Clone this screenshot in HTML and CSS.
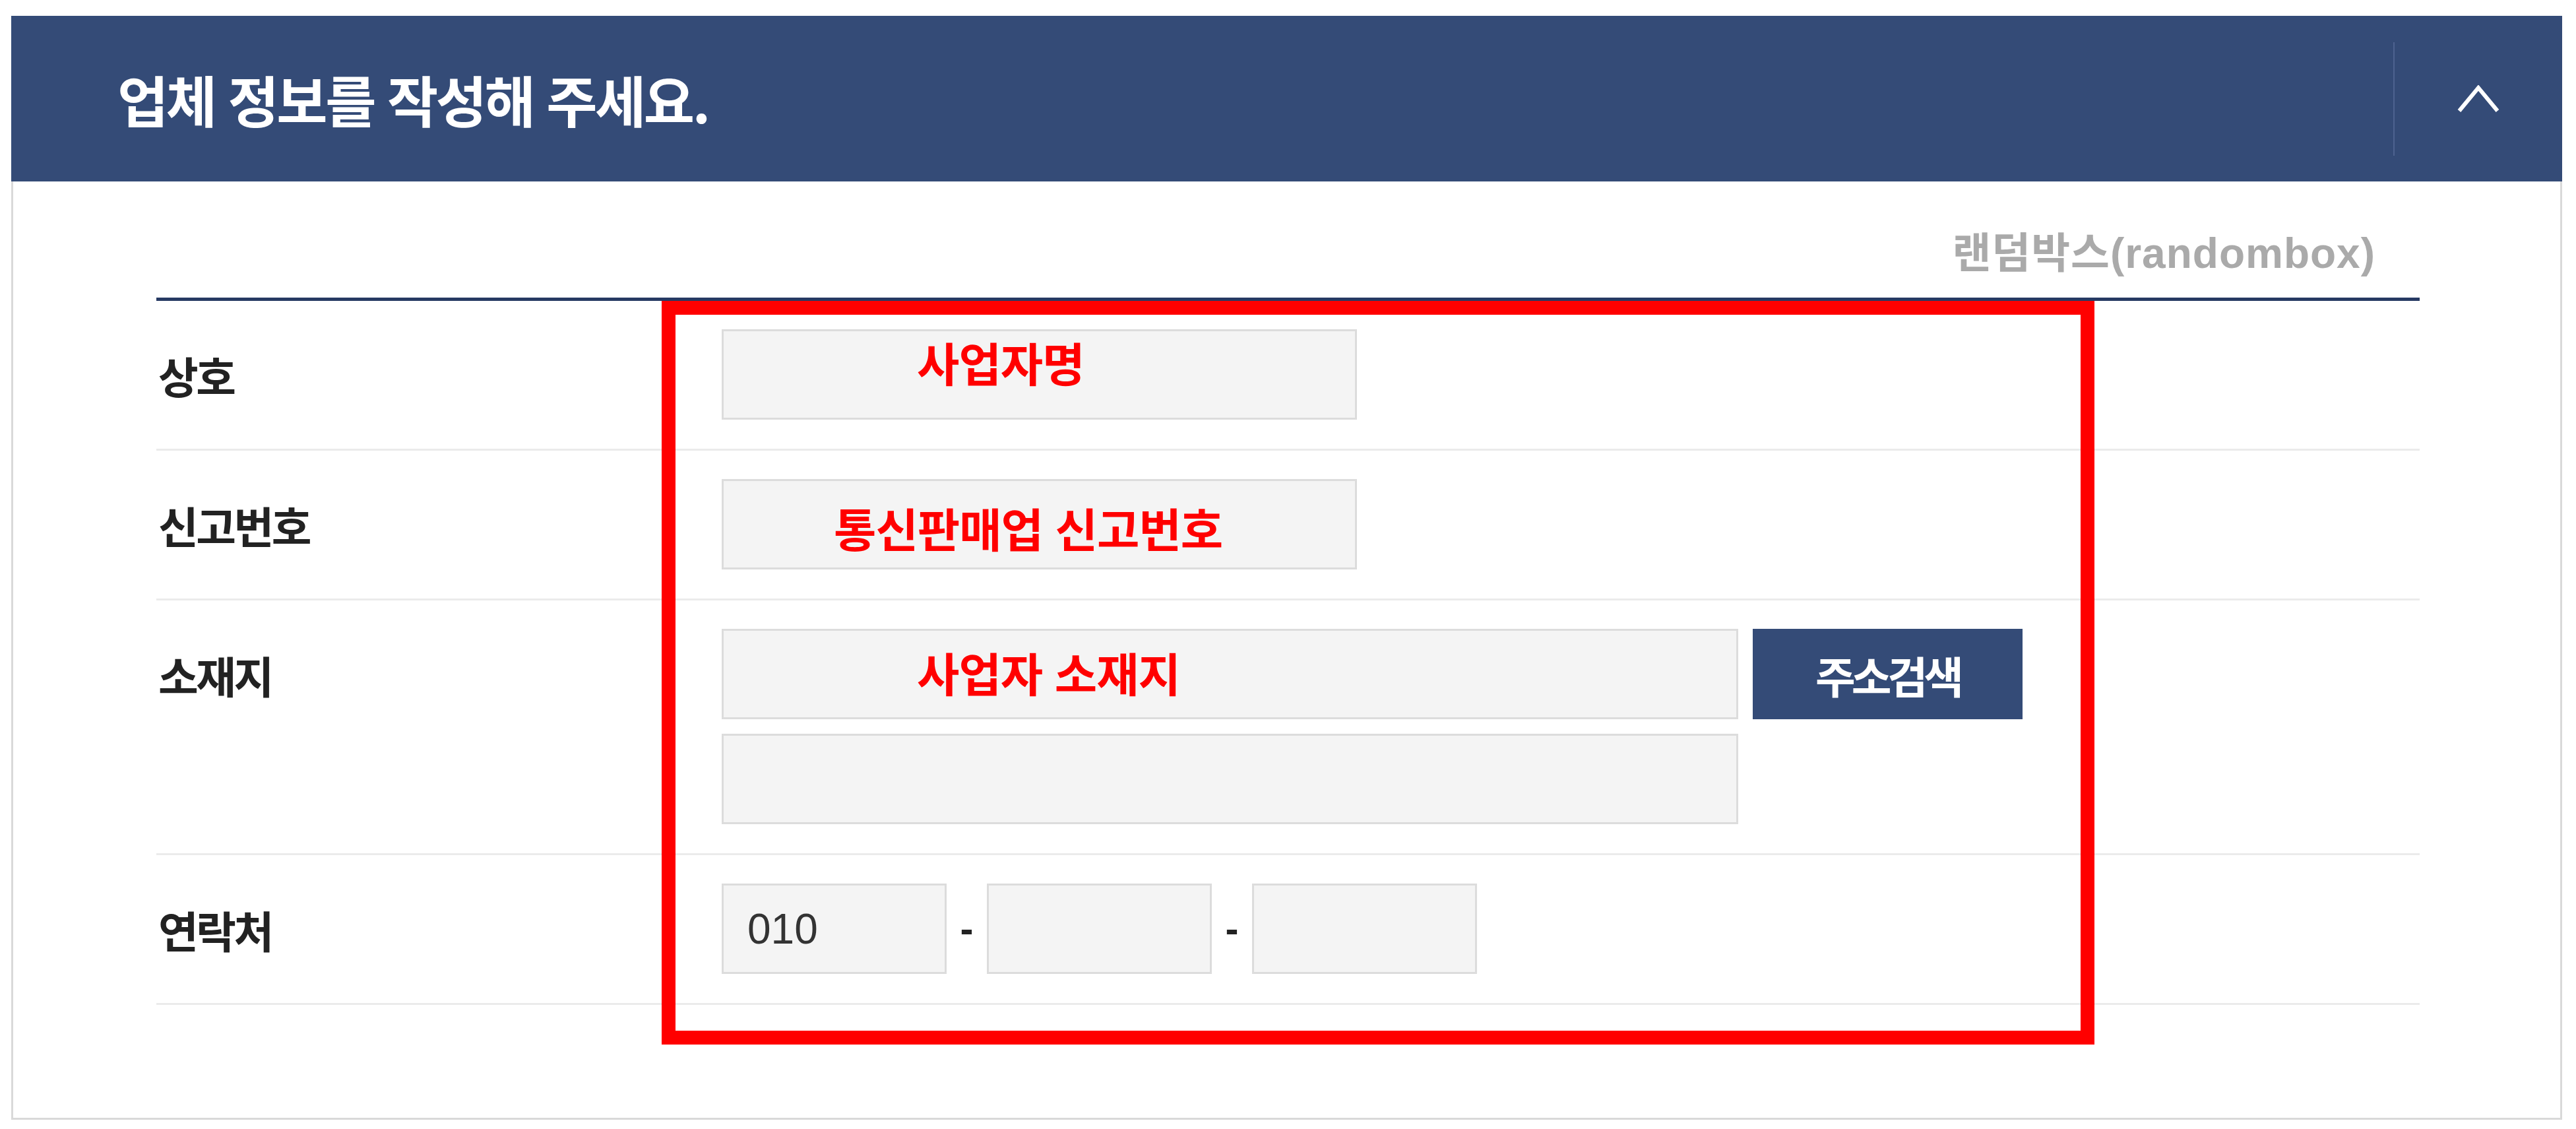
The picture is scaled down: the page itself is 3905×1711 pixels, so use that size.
FILE: index.html
```html
<!DOCTYPE html>
<html lang="ko">
<head>
<meta charset="utf-8">
<title>업체 정보</title>
<link rel="stylesheet" href="styles.css">
</head>
<body>
<section class="panel">
  <header class="panel-head">
    <h2 class="panel-title">업체 정보를 작성해 주세요.</h2>
    <button class="toggle" type="button" aria-label="접기">
      <svg class="chev" viewBox="0 0 64 42" width="64" height="42"><polyline points="3,39 32,4 61,39"/></svg>
    </button>
  </header>
  <div class="panel-body">
    <div class="brand">랜덤박스(randombox)</div>
    <div class="form">
      <div class="row">
        <div class="label">상호</div>
        <div class="fields">
          <div class="field w-md note-a"><span class="note">사업자명</span></div>
        </div>
      </div>
      <div class="row">
        <div class="label">신고번호</div>
        <div class="fields">
          <div class="field w-md note-b"><span class="note">통신판매업 신고번호</span></div>
        </div>
      </div>
      <div class="row">
        <div class="label">소재지</div>
        <div class="fields">
          <div class="line">
            <div class="field w-lg note-c"><span class="note">사업자 소재지</span></div>
            <button class="btn" type="button">주소검색</button>
          </div>
          <div class="field w-lg"></div>
        </div>
      </div>
      <div class="row">
        <div class="label">연락처</div>
        <div class="fields">
          <div class="line phone">
            <div class="field w-sm"><span class="val">010</span></div>
            <span class="dash">-</span>
            <div class="field w-sm"></div>
            <span class="dash">-</span>
            <div class="field w-sm"></div>
          </div>
        </div>
      </div>
    </div>
    <div class="highlight"></div>
  </div>
</section>
</body>
</html>
```
FILE: styles.css
```css
html, body {
  margin: 0;
  padding: 0;
  background: #ffffff;
}
body {
  width: 3905px;
  height: 1711px;
  font-family: "Liberation Sans", "Noto Sans CJK KR", sans-serif;
  overflow: hidden;
}
.panel {
  margin: 24px 0 0 17px;
  width: 3867px;
}
.panel-head {
  height: 251px;
  background: #344b77;
  display: flex;
  align-items: center;
}
.panel-title {
  flex: 1;
  margin: 0;
  padding-left: 161px;
  color: #ffffff;
  font-family: "Noto Sans CJK KR", sans-serif;
  font-size: 84px;
  font-weight: 700;
  letter-spacing: -3.5px;
  line-height: 1;
}
.toggle {
  width: 256px;
  height: 172px;
  padding: 0;
  border: 0;
  border-left: 2px solid #4e6290;
  background: transparent;
  display: flex;
  align-items: center;
  justify-content: center;
}
.chev polyline {
  fill: none;
  stroke: #ffffff;
  stroke-width: 6;
}
.panel-body {
  position: relative;
  height: 1422px;
  box-sizing: border-box;
  border: 3px solid #d9d9d9;
  border-top: 0;
  padding: 0 213px 0 217px;
}
.brand {
  height: 176px;
  box-sizing: border-box;
  padding: 72px 67px 0 0;
  text-align: right;
  color: #aaaaaa;
  font-size: 64px;
  font-weight: 700;
  line-height: 74px;
  letter-spacing: 1px;
}
.form {
  border-top: 5px solid #263a63;
}
.row {
  display: grid;
  grid-template-columns: 857px 1fr;
  padding: 43px 0 44px;
  border-bottom: 3px solid #ebebeb;
}
.label {
  height: 137px;
  display: flex;
  align-items: center;
  padding-left: 3px;
  color: #222222;
  font-family: "Noto Sans CJK KR", sans-serif;
  font-size: 66px;
  font-weight: 700;
  letter-spacing: -3.5px;
}
.fields {
  display: flex;
  flex-direction: column;
  gap: 22px;
}
.line {
  display: flex;
  align-items: center;
  gap: 22px;
}
.phone {
  gap: 0;
}
.field {
  height: 137px;
  box-sizing: border-box;
  border: 3px solid #dcdcdc;
  background: #f4f4f4;
  display: flex;
  align-items: flex-start;
}
.w-md { width: 963px; }
.w-lg { width: 1541px; }
.w-sm { width: 341px; }
.note {
  color: #ff0000;
  font-family: "Noto Sans CJK KR", sans-serif;
  font-size: 70px;
  font-weight: 700;
  letter-spacing: -1px;
  line-height: 1;
}
.note-a { padding: 12px 0 0 293px; }
.note-b { padding: 36px 0 0 167px; }
.note-c { padding: 28px 0 0 293px; }
.val {
  align-self: center;
  padding-left: 36px;
  color: #333333;
  font-size: 64px;
}
.dash {
  width: 61px;
  text-align: center;
  color: #222222;
  font-size: 60px;
  font-weight: 700;
}
.btn {
  width: 409px;
  height: 137px;
  padding: 0;
  border: 0;
  background: #344b77;
  color: #ffffff;
  font-family: "Noto Sans CJK KR", sans-serif;
  font-size: 66px;
  font-weight: 700;
  letter-spacing: -6px;
}
.highlight {
  position: absolute;
  left: 983px;
  top: 181px;
  width: 2172px;
  height: 1127px;
  box-sizing: border-box;
  border: 21px solid #ff0000;
  pointer-events: none;
}
```
